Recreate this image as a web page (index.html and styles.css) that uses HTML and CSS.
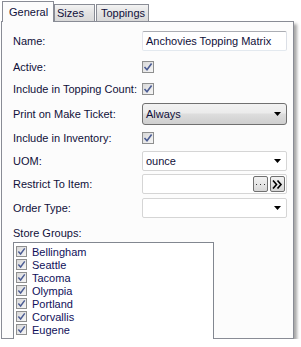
FILE: index.html
```html
<!DOCTYPE html>
<html lang="en">
<head>
    <meta charset="UTF-8">
    <meta name="viewport" content="width=device-width, initial-scale=1.0">
    <title>Topping</title>
    <link rel="stylesheet" href="styles.css">
</head>
<body>

<div class="window">
    <div class="tabs">
        <div class="tab active">General</div>
        <div class="tab sizes">Sizes</div>
        <div class="tab toppings">Toppings</div>
    </div>

    <div class="panel">
        <div class="row r-name">
            <span class="label">Name:</span>
            <div class="textbox">Anchovies Topping Matrix</div>
        </div>
        <div class="row r-check r-active">
            <span class="label">Active:</span>
            <span class="check"><svg width="10" height="10" viewBox="0 0 10 10"><path d="M1.5 5 L4 7.8 L8.6 1.6" fill="none" stroke="#4b5c93" stroke-width="1.6"/></svg></span>
        </div>
        <div class="row r-check">
            <span class="label">Include in Topping Count:</span>
            <span class="check"><svg width="10" height="10" viewBox="0 0 10 10"><path d="M1.5 5 L4 7.8 L8.6 1.6" fill="none" stroke="#4b5c93" stroke-width="1.6"/></svg></span>
        </div>
        <div class="row r-print">
            <span class="label">Print on Make Ticket:</span>
            <div class="combo">
                <span>Always</span>
                <svg class="arrow" width="7" height="4" viewBox="0 0 7 4"><path d="M0 0 H7 L3.5 4 Z" fill="#000"/></svg>
            </div>
        </div>
        <div class="row r-check r-inv">
            <span class="label">Include in Inventory:</span>
            <span class="check"><svg width="10" height="10" viewBox="0 0 10 10"><path d="M1.5 5 L4 7.8 L8.6 1.6" fill="none" stroke="#4b5c93" stroke-width="1.6"/></svg></span>
        </div>
        <div class="row r-uom">
            <span class="label">UOM:</span>
            <div class="dropdown">
                <span>ounce</span>
                <svg class="arrow" width="7" height="4" viewBox="0 0 7 4"><path d="M0 0 H7 L3.5 4 Z" fill="#000"/></svg>
            </div>
        </div>
        <div class="row r-restrict">
            <span class="label">Restrict To Item:</span>
            <div class="dropdown picker">
                <span class="btn"><svg width="9" height="3" viewBox="0 0 9 3"><rect x="0" y="1" width="1" height="1" fill="#333"/><rect x="4" y="1" width="1" height="1" fill="#333"/><rect x="8" y="1" width="1" height="1" fill="#333"/></svg></span>
                <span class="btn"><svg width="11" height="9" viewBox="0 0 11 9"><path d="M1 0.5 L4.5 4.5 L1 8.5 M5.5 0.5 L9 4.5 L5.5 8.5" fill="none" stroke="#000" stroke-width="1.6"/></svg></span>
            </div>
        </div>
        <div class="row r-order">
            <span class="label">Order Type:</span>
            <div class="dropdown">
                <span></span>
                <svg class="arrow" width="7" height="4" viewBox="0 0 7 4"><path d="M0 0 H7 L3.5 4 Z" fill="#000"/></svg>
            </div>
        </div>
        <div class="groups-label">Store Groups:</div>
        <div class="listbox">
            <div class="item"><span class="check small"><svg width="9" height="9" viewBox="0 0 10 10"><path d="M1.5 5 L4 7.8 L8.6 1.6" fill="none" stroke="#4b5c93" stroke-width="1.6"/></svg></span>Bellingham</div>
            <div class="item"><span class="check small"><svg width="9" height="9" viewBox="0 0 10 10"><path d="M1.5 5 L4 7.8 L8.6 1.6" fill="none" stroke="#4b5c93" stroke-width="1.6"/></svg></span>Seattle</div>
            <div class="item"><span class="check small"><svg width="9" height="9" viewBox="0 0 10 10"><path d="M1.5 5 L4 7.8 L8.6 1.6" fill="none" stroke="#4b5c93" stroke-width="1.6"/></svg></span>Tacoma</div>
            <div class="item"><span class="check small"><svg width="9" height="9" viewBox="0 0 10 10"><path d="M1.5 5 L4 7.8 L8.6 1.6" fill="none" stroke="#4b5c93" stroke-width="1.6"/></svg></span>Olympia</div>
            <div class="item"><span class="check small"><svg width="9" height="9" viewBox="0 0 10 10"><path d="M1.5 5 L4 7.8 L8.6 1.6" fill="none" stroke="#4b5c93" stroke-width="1.6"/></svg></span>Portland</div>
            <div class="item"><span class="check small"><svg width="9" height="9" viewBox="0 0 10 10"><path d="M1.5 5 L4 7.8 L8.6 1.6" fill="none" stroke="#4b5c93" stroke-width="1.6"/></svg></span>Corvallis</div>
            <div class="item"><span class="check small"><svg width="9" height="9" viewBox="0 0 10 10"><path d="M1.5 5 L4 7.8 L8.6 1.6" fill="none" stroke="#4b5c93" stroke-width="1.6"/></svg></span>Eugene</div>
        </div>
    </div>
</div>

</body>
</html>
```

FILE: styles.css
```css
body {
    margin: 0;
    background-color: #ffffff;
    font-family: "Liberation Sans", Arial, sans-serif;
    font-size: 11px;
    color: #10103a;
}

.window {
    padding: 1px 0 0 1px;
    width: 293px;
}

/* tab strip */
.tabs {
    display: flex;
    align-items: flex-end;
    padding-left: 1px;
    height: 20px;
}

.tab {
    height: 17px;
    line-height: 17px;
    box-sizing: border-box;
    border: 1px solid #898c95;
    border-bottom: none;
    background: linear-gradient(#f3f3f3, #e3e3e3 50%, #d9d9d9);
    padding: 0 3px;
    margin-right: -1px;
}

.tab.sizes {
    width: 41px;
    margin-left: 1px;
    padding-left: 2px;
}

.tab.toppings {
    width: 53px;
    margin-left: 2px;
    padding-left: 4px;
}

.tab.active {
    position: relative;
    z-index: 2;
    height: 21px;
    line-height: 20px;
    width: 52px;
    margin-bottom: -1px;
    background: #fcfcfc;
    padding-left: 6px;
}

/* page body */
.panel {
    height: 318px;
    border: 1px solid #898c95;
    background-color: #fcfcfc;
    padding: 9px 6px 0 11px;
    box-sizing: border-box;
    box-shadow: 3px 3px 3px rgba(0, 0, 0, 0.35);
}

.row {
    display: flex;
    align-items: center;
    height: 20px;
}

.label {
    width: 129px;
    flex: none;
}

.r-active {
    margin-top: 5px;
    height: 22px;
}

.r-check {
    height: 22px;
}

.r-print {
    margin-top: 3px;
    height: 22px;
}

.r-inv {
    margin-top: 2px;
}

.r-uom {
    margin-top: 2px;
}

.r-restrict {
    margin-top: 3px;
}

.r-order {
    margin-top: 4px;
}

.textbox, .dropdown, .combo {
    box-sizing: border-box;
    width: 145px;
    height: 20px;
    line-height: 18px;
    padding: 0 3px;
    border: 1px solid #d5d5d5;
    border-radius: 2px;
    background: #ffffff;
}

.textbox {
    border-color: #abadb3 #dbdfe6 #e3e9ef #e2e3ea;
}

.dropdown, .combo {
    display: flex;
    align-items: center;
    justify-content: space-between;
    padding-right: 5px;
}

.combo {
    height: 22px;
    border: 1px solid #707070;
    border-radius: 3px;
    background: linear-gradient(#f2f2f2, #ebebeb 45%, #dddddd 50%, #cfcfcf);
}

.picker {
    justify-content: flex-end;
    gap: 2px;
    padding-right: 1px;
}

.btn {
    box-sizing: border-box;
    width: 15px;
    height: 16px;
    border: 1px solid #707070;
    border-radius: 2px;
    background: linear-gradient(#f2f2f2, #e6e6e6 50%, #d6d6d6);
    display: flex;
    align-items: center;
    justify-content: center;
}

.check {
    box-sizing: border-box;
    width: 12px;
    height: 12px;
    border: 1px solid #8e8f8f;
    background: linear-gradient(135deg, #d8d8d8, #f6f6f6);
    display: flex;
    align-items: center;
    justify-content: center;
}

.check.small {
    width: 11px;
    height: 11px;
    margin-right: 5px;
}

.groups-label {
    margin-top: 8px;
    height: 14px;
    line-height: 14px;
}

.listbox {
    box-sizing: border-box;
    width: 201px;
    height: 97px;
    margin-top: 2px;
    border: 1px solid #828790;
    border-bottom: none;
    background: #ffffff;
    padding: 2px 0 0 2px;
}

.item {
    display: flex;
    align-items: center;
    height: 13px;
    color: #10105a;
}
```
